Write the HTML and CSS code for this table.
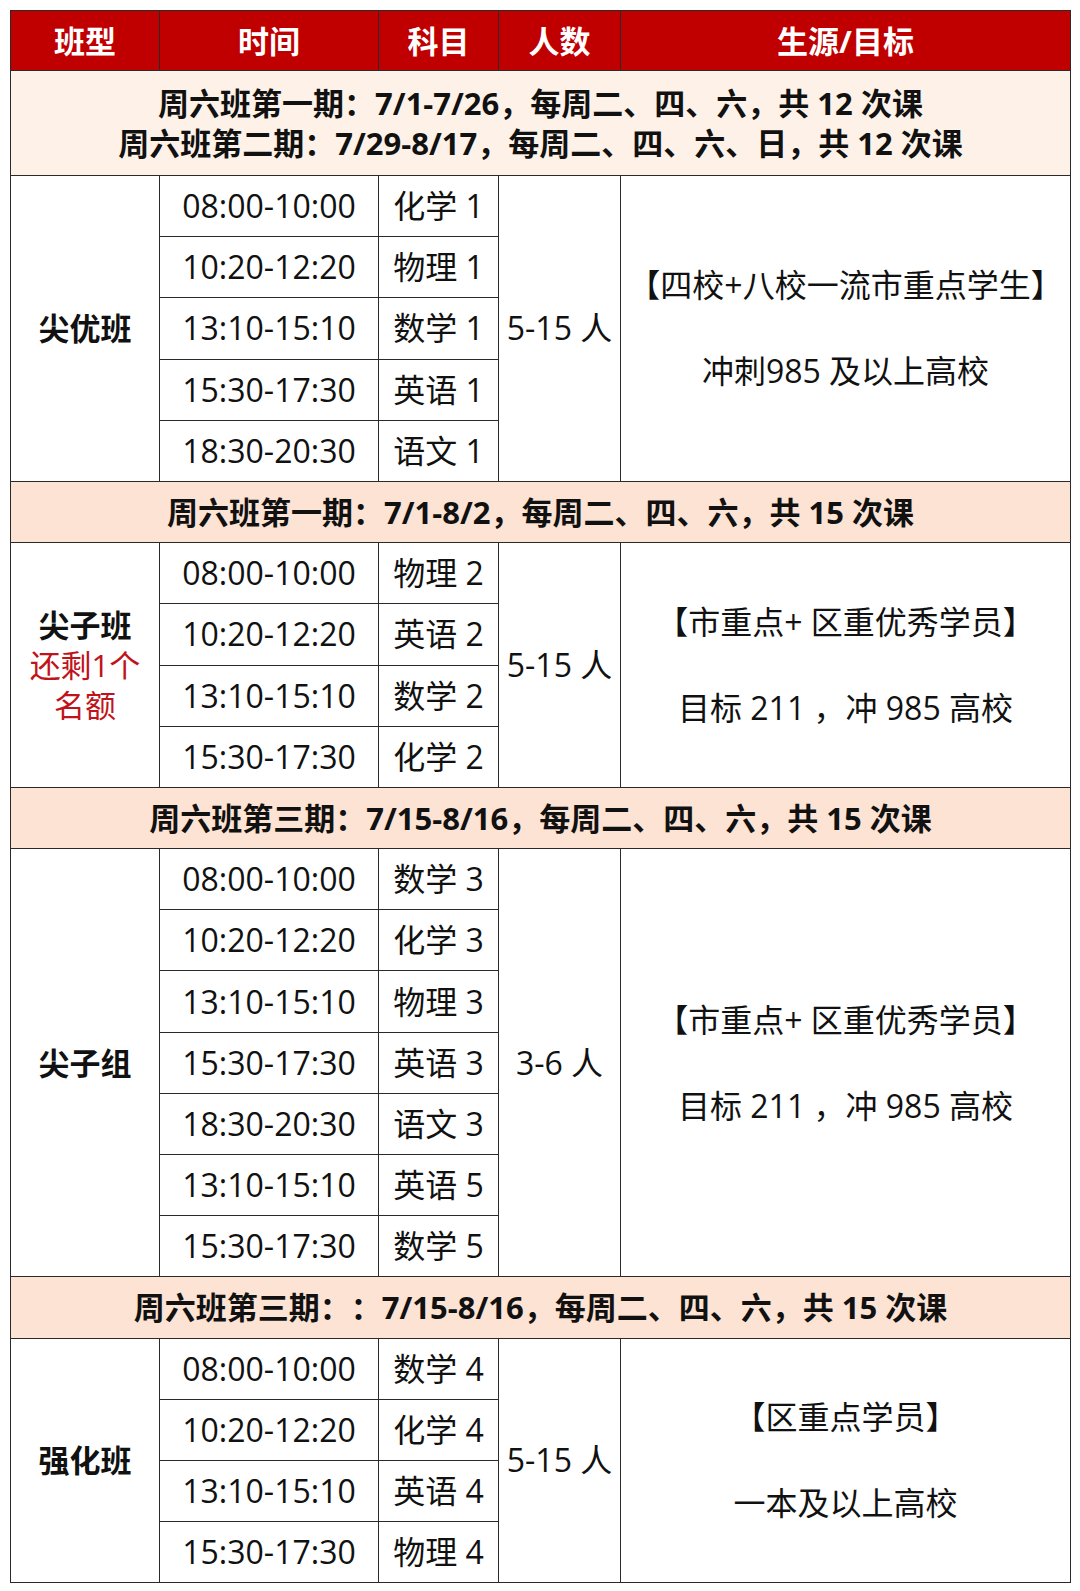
FILE: index.html
```html
<!DOCTYPE html>
<html lang="zh-CN">
<head>
<meta charset="utf-8">
<title>课程表</title>
<link rel="stylesheet" href="styles.css">
</head>
<body>
<table class="sched">
  <colgroup>
    <col class="c1"><col class="c2"><col class="c3"><col class="c4"><col class="c5">
  </colgroup>
  <thead>
    <tr class="head"><th>班型</th><th>时间</th><th>科目</th><th>人数</th><th>生源/目标</th></tr>
  </thead>
  <tbody>
    <tr class="band band-light"><td colspan="5">周六班第一期：7/1-7/26，每周二、四、六，共 12 次课<br>周六班第二期：7/29-8/17，每周二、四、六、日，共 12 次课</td></tr>
    <tr class="row"><td class="cls" rowspan="5">尖优班</td><td>08:00-10:00</td><td>化学 1</td><td class="num" rowspan="5">5-15 人</td><td class="goal" rowspan="5"><div class="goal-line">【四校+八校一流市重点学生】</div><div class="goal-line">冲刺985 及以上高校</div></td></tr>
    <tr class="row"><td>10:20-12:20</td><td>物理 1</td></tr>
    <tr class="row"><td>13:10-15:10</td><td>数学 1</td></tr>
    <tr class="row"><td>15:30-17:30</td><td>英语 1</td></tr>
    <tr class="row"><td>18:30-20:30</td><td>语文 1</td></tr>

    <tr class="band"><td colspan="5">周六班第一期：7/1-8/2，每周二、四、六，共 15 次课</td></tr>
    <tr class="row"><td class="cls" rowspan="4">尖子班<div class="note">还剩1个<br>名额</div></td><td>08:00-10:00</td><td>物理 2</td><td class="num" rowspan="4">5-15 人</td><td class="goal" rowspan="4"><div class="goal-line">【市重点+ 区重优秀学员】</div><div class="goal-line">目标 211 ，冲 985 高校</div></td></tr>
    <tr class="row"><td>10:20-12:20</td><td>英语 2</td></tr>
    <tr class="row"><td>13:10-15:10</td><td>数学 2</td></tr>
    <tr class="row"><td>15:30-17:30</td><td>化学 2</td></tr>

    <tr class="band"><td colspan="5">周六班第三期：7/15-8/16，每周二、四、六，共 15 次课</td></tr>
    <tr class="row"><td class="cls" rowspan="7">尖子组</td><td>08:00-10:00</td><td>数学 3</td><td class="num" rowspan="7">3-6 人</td><td class="goal" rowspan="7"><div class="goal-line">【市重点+ 区重优秀学员】</div><div class="goal-line">目标 211 ，冲 985 高校</div></td></tr>
    <tr class="row"><td>10:20-12:20</td><td>化学 3</td></tr>
    <tr class="row"><td>13:10-15:10</td><td>物理 3</td></tr>
    <tr class="row"><td>15:30-17:30</td><td>英语 3</td></tr>
    <tr class="row"><td>18:30-20:30</td><td>语文 3</td></tr>
    <tr class="row"><td>13:10-15:10</td><td>英语 5</td></tr>
    <tr class="row"><td>15:30-17:30</td><td>数学 5</td></tr>

    <tr class="band"><td colspan="5">周六班第三期：：7/15-8/16，每周二、四、六，共 15 次课</td></tr>
    <tr class="row"><td class="cls" rowspan="4">强化班</td><td>08:00-10:00</td><td>数学 4</td><td class="num" rowspan="4">5-15 人</td><td class="goal" rowspan="4"><div class="goal-line">【区重点学员】</div><div class="goal-line">一本及以上高校</div></td></tr>
    <tr class="row"><td>10:20-12:20</td><td>化学 4</td></tr>
    <tr class="row"><td>13:10-15:10</td><td>英语 4</td></tr>
    <tr class="row"><td>15:30-17:30</td><td>物理 4</td></tr>
  </tbody>
</table>
</body>
</html>
```

FILE: styles.css
```css
html, body {
  margin: 0;
  padding: 0;
  background: #ffffff;
}
body {
  padding: 10px;
  font-family: "Open Sans", "Noto Sans CJK SC", sans-serif;
  color: #111111;
  text-spacing-trim: space-all;
}
.sched {
  border-collapse: collapse;
  table-layout: fixed;
  width: 1060px;
  font-size: 32px;
}
.c1 { width: 149px; }
.c2 { width: 219px; }
.c3 { width: 120px; }
.c4 { width: 122px; }
.c5 { width: 450px; }
.sched th,
.sched td {
  border: 1px solid #2a2a2a;
  padding: 0;
  text-align: center;
  vertical-align: middle;
  line-height: 40px;
  white-space: nowrap;
}
.head th {
  height: 59px;
  background: #c00000;
  color: #ffffff;
  font-weight: 700;
  font-size: 31px;
}
.band td {
  height: 60.2px;
  background: #fce3d3;
  font-weight: 700;
  font-size: 31px;
}
.band-light td {
  height: 104px;
  background: #fdf1e8;
}
.row td {
  height: 60.2px;
}
.cls {
  font-weight: 700;
  font-size: 31px;
}
.note {
  font-weight: 400;
  color: #c0141c;
  font-size: 31px;
  line-height: 40px;
}
.goal-line {
  line-height: 40px;
}
.goal-line + .goal-line {
  margin-top: 46px;
}
```
